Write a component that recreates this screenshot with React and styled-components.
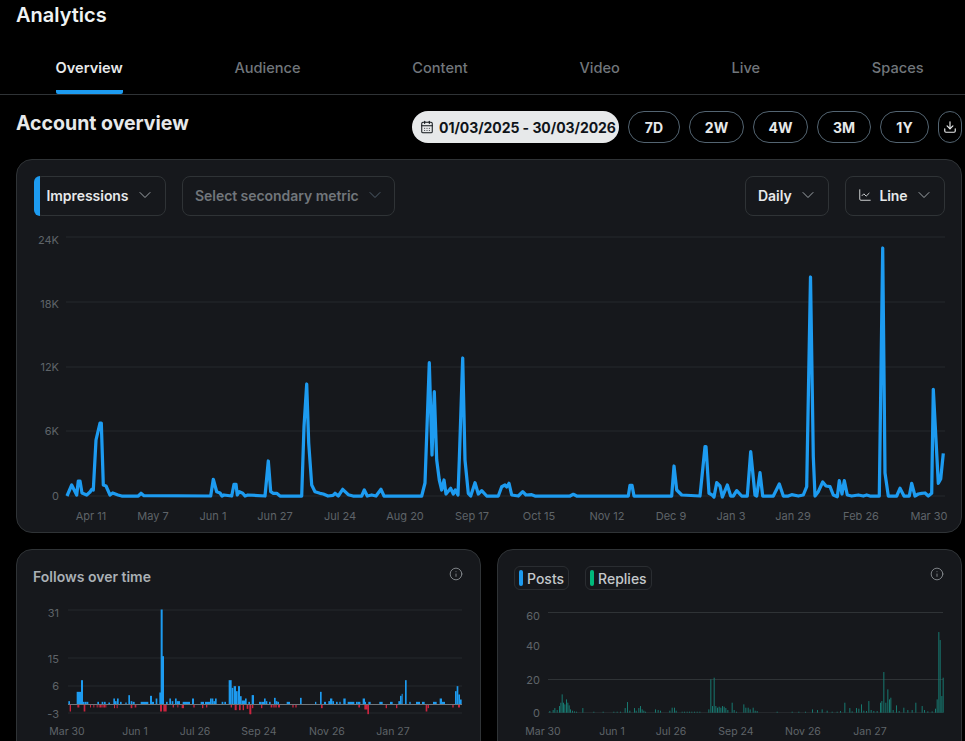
import React from 'react';
import styled, { createGlobalStyle } from 'styled-components';
import { CalendarDays, ChartLine, ChevronDown, Download, Info } from 'lucide-react';

const GlobalStyle = createGlobalStyle`
    html, body {
        margin: 0;
        padding: 0;
        background: #000;
        overflow: hidden;
    }
    * {
        box-sizing: border-box;
    }
`;

const TABS = ['Overview', 'Audience', 'Content', 'Video', 'Live', 'Spaces'];
const RANGES = [['7D', 52], ['2W', 55], ['4W', 55], ['3M', 54], ['1Y', 49]];

// main chart points, in page pixels
const IMPRESSIONS = [
    [67, 496], [71.7, 485], [76.7, 495], [78.3, 481], [80, 481], [82, 493], [86.7, 495], [90, 492], [91.7, 489.5], [93.3, 490],
    [96, 440], [100, 423], [101.3, 423], [103.3, 485], [106, 486], [110, 495], [112.7, 493], [118, 495], [121.7, 496],
    [138.3, 496], [141, 493.3], [144, 495.7], [210.7, 496], [213.3, 479.3], [216.7, 491.7], [220, 493], [222, 496], [224, 495],
    [231.7, 496], [234, 484.3], [236, 484.3], [237.3, 495], [239.3, 491.7], [242.7, 493.3], [245, 496], [248, 495], [265, 496],
    [268.3, 461], [270.7, 491.7], [273.3, 493.3], [276.7, 493.3], [280, 496], [301.7, 496], [304, 426.7], [306.7, 384], [308.7, 443],
    [311.7, 485], [315, 491.7], [320, 493.3], [323.3, 494], [328, 496], [333, 495.3], [335, 493.3], [338.3, 496], [342.7, 489.3],
    [348.3, 494.7], [353, 496], [361.7, 496], [364.3, 490], [367.3, 496], [371.7, 495], [376, 496], [381, 489.3], [384, 496],
    [421.7, 496], [425, 483], [429.3, 362.7], [432, 455], [434.3, 391.7], [436.7, 460], [439.3, 480], [441.7, 490], [444, 480],
    [446, 494], [450.7, 488.3], [453.3, 494], [455.3, 490], [458, 495], [459.3, 460], [462.7, 358], [465, 460], [468.3, 493.3],
    [470.7, 496], [475, 482.7], [478.3, 494], [481.7, 490.7], [486.7, 496], [498.3, 496], [501.7, 486.7], [505, 485], [506.7, 487],
    [509, 483.3], [511.7, 495], [518.3, 496], [522.7, 491.7], [526, 495], [531.7, 494.7], [535, 496], [570, 496], [573.3, 494.3],
    [576.7, 496], [628.3, 496], [630, 485.3], [632, 485.3], [634, 496], [671.7, 496], [674, 466], [676.7, 490], [681.7, 495],
    [700, 496], [705, 446.7], [706, 446.7], [709, 493.3], [711.7, 494.7], [714, 497], [716.7, 482.7], [720, 486], [722.3, 497],
    [727.3, 485], [730.7, 496], [733.3, 496], [736.7, 490.7], [741.7, 496], [747.3, 496], [750.7, 451.7], [755, 495], [756.7, 496],
    [760, 472.7], [762.7, 496], [773.3, 496], [779.3, 484], [783.3, 496], [788.3, 496], [791.7, 494.7], [798.3, 496], [803.3, 495],
    [806.7, 486.7], [810.5, 277], [813.3, 456.7], [815, 496], [818.3, 491.7], [822.7, 482], [826, 486], [830, 486.7], [833.3, 495],
    [837.3, 496.7], [839.3, 480.7], [842, 494], [844.3, 480.7], [847.3, 495], [851.7, 496], [858.3, 495], [863.3, 496], [866.7, 495],
    [870, 496], [879.3, 496], [882.7, 248], [885, 473], [888.3, 496], [896.7, 496], [900, 488.3], [904, 496], [909.3, 496],
    [911.7, 483.3], [915, 496], [918.3, 494], [921.7, 493.3], [925, 493], [928.3, 496], [931.7, 493.3], [933.3, 389.3],
    [938.3, 483.3], [940.7, 479], [943.3, 453.3],
];

const MAIN_Y = [['24K', 237, 244], ['18K', 302, 308], ['12K', 367, 371], ['6K', 431, 435], ['0', 496, 500]];
const MAIN_X = [
    ['Apr 11', 91], ['May 7', 153], ['Jun 1', 213], ['Jun 27', 275], ['Jul 24', 340], ['Aug 20', 405], ['Sep 17', 472],
    ['Oct 15', 539], ['Nov 12', 607], ['Dec 9', 671], ['Jan 3', 731], ['Jan 29', 793], ['Feb 26', 861], ['Mar 30', 929],
];

// follows bars: [from, to, height] measured on 3x crops, first half starts at x=40, second at x=250
const FOLLOWS_UP_A = [
    [85, 90, 10], [110, 123, 38], [123, 129, 73], [129, 134, 8], [135, 140, 8], [140, 145, 8], [172, 177, 8], [185, 190, 8],
    [192, 197, 8], [205, 210, 6], [220, 225, 18], [225, 230, 10], [231, 236, 18], [240, 245, 8], [256, 260, 6], [265, 270, 28],
    [272, 277, 10], [278, 284, 8], [302, 325, 8], [330, 336, 26], [336, 342, 8], [347, 352, 18], [358, 363, 36], [362, 368, 285],
    [364, 372, 145], [378, 383, 8], [388, 393, 18], [395, 400, 10], [405, 410, 18], [410, 420, 10], [428, 450, 8], [456, 462, 18],
    [482, 492, 8], [495, 510, 8], [510, 515, 18], [515, 520, 18], [520, 525, 10], [525, 530, 18], [545, 550, 8], [553, 558, 8],
    [566, 575, 73], [575, 580, 50], [581, 588, 55], [588, 593, 40], [594, 600, 55], [600, 605, 25], [605, 615, 12], [615, 620, 18],
    [625, 630, 8], [637, 642, 28], [657, 660, 6],
];
const FOLLOWS_UP_B = [
    [5, 10, 28], [27, 35, 8], [35, 42, 8], [42, 47, 18], [47, 52, 10], [57, 62, 8], [72, 77, 20], [77, 82, 10], [82, 87, 8],
    [110, 120, 8], [150, 155, 20], [195, 199, 8], [210, 215, 38], [222, 228, 8], [235, 240, 10], [240, 247, 18], [247, 252, 10],
    [258, 263, 8], [268, 272, 8], [280, 287, 18], [293, 313, 8], [318, 323, 8], [323, 331, 8], [338, 345, 18], [345, 348, 8],
    [355, 362, 8], [388, 398, 8], [420, 428, 8], [445, 450, 10], [450, 455, 26], [455, 458, 32], [465, 470, 73], [478, 482, 8],
    [498, 510, 8], [516, 524, 8], [549, 560, 8], [569, 576, 18], [576, 585, 8], [615, 620, 40], [620, 625, 55], [625, 630, 30],
    [630, 635, 15],
];
const FOLLOWS_DOWN_A = [
    [89, 93, 18], [112, 118, 6], [131, 136, 18], [150, 153, 6], [160, 163, 6], [170, 173, 6], [176, 179, 6], [180, 183, 6],
    [184, 187, 6], [188, 191, 6], [192, 195, 6], [196, 199, 6], [222, 225, 8], [230, 233, 8], [272, 277, 8], [284, 289, 6],
    [360, 366, 18], [370, 380, 18], [398, 402, 6], [412, 415, 6], [425, 432, 8], [460, 464, 6], [486, 490, 8], [498, 502, 6],
    [572, 576, 6], [584, 590, 14], [597, 602, 14], [608, 612, 14], [620, 625, 10], [628, 633, 26], [636, 640, 8],
];
const FOLLOWS_DOWN_B = [
    [0, 4, 26], [33, 37, 8], [62, 67, 6], [70, 74, 6], [76, 80, 6], [84, 90, 6], [127, 131, 6], [136, 140, 6], [213, 218, 8],
    [325, 330, 6], [343, 353, 12], [352, 357, 26], [407, 411, 8], [438, 442, 8], [527, 532, 18], [533, 537, 8], [607, 611, 6],
    [624, 630, 6],
];

const FOLLOWS_Y = [['31', 610, 617], ['15', 658, 663], ['6', 686, 690], ['-3', 713, 718]];
const FOLLOWS_X = [['Mar 30', 67], ['Jun 1', 135], ['Jul 26', 195], ['Sep 24', 259], ['Nov 26', 327], ['Jan 27', 393]];
const POSTS_Y = [['60', 620], ['40', 650], ['20', 684], ['0', 717]];
const POSTS_X = [['Mar 30', 543], ['Jun 1', 612], ['Jul 26', 671], ['Sep 24', 736], ['Nov 26', 803], ['Jan 27', 870]];

// posts bars: [x, height] on a 3x crop starting at x=490
const POSTS = [
    [178, 5], [188, 8], [193, 14], [200, 8], [207, 20], [211, 30], [215, 55], [219, 30], [223, 25], [228, 40], [232, 30], [236, 22],
    [240, 10], [246, 6], [252, 4], [258, 3], [277, 14], [310, 3], [338, 3], [370, 3], [380, 3], [390, 3], [404, 14], [411, 32],
    [418, 6], [432, 14], [437, 6], [445, 14], [450, 20], [455, 10], [460, 6], [465, 3], [495, 10], [503, 8], [510, 6], [538, 6],
    [545, 15], [552, 15], [557, 6], [575, 3], [582, 3], [590, 3], [597, 3], [604, 3], [612, 3], [620, 3], [628, 3], [655, 10],
    [661, 100], [666, 20], [671, 105], [676, 20], [681, 15], [686, 18], [691, 15], [696, 20], [701, 18], [706, 14], [712, 8],
    [725, 30], [731, 8], [738, 3], [760, 25], [766, 15], [773, 15], [779, 10], [788, 15], [794, 6], [800, 5], [860, 3], [905, 3],
    [925, 3], [945, 3], [966, 10], [981, 8], [995, 10], [1010, 6], [1025, 3], [1040, 3], [1050, 5], [1063, 30], [1078, 14],
    [1085, 4], [1098, 14], [1105, 12], [1113, 25], [1120, 6], [1128, 5], [1135, 35], [1142, 8], [1150, 5], [1160, 5], [1170, 30],
    [1174, 35], [1180, 122], [1186, 30], [1192, 70], [1197, 40], [1201, 45], [1208, 8], [1218, 22], [1226, 5], [1240, 15],
    [1252, 8], [1265, 8], [1276, 30], [1295, 20], [1302, 8], [1312, 4], [1325, 4], [1335, 12], [1340, 40], [1345, 242], [1349, 218],
    [1354, 50], [1358, 105],
];

const FollowBars = ({ list, origin, down }) =>
    list.map(([from, to, h]) => (
        <Bar
            key={`${origin}-${from}-${down}`}
            x={origin + from / 3}
            y={down ? 704.5 : 704.5 - h / 3}
            width={(to - from) / 3}
            height={down ? h / 3 + 1 : h / 3}
            $fill={down ? '#c9243f' : '#1d9bf0'}
        />
    ));

const App = () => {
    return (
        <Page>
            <GlobalStyle />
            <PageTitle>Analytics</PageTitle>

            <TabRow>
                {TABS.map((tab, i) => (
                    <Tab key={tab} $active={i === 0}>{tab}</Tab>
                ))}
            </TabRow>

            <OverviewRow>
                <Heading>Account overview</Heading>
                <Controls>
                    <DatePill>
                        <CalendarDays size={14} strokeWidth={1.75} />
                        01/03/2025 - 30/03/2026
                    </DatePill>
                    {RANGES.map(([label, width]) => (
                        <RangePill key={label} $width={width}>{label}</RangePill>
                    ))}
                    <RangePill $width={24} $round><Download size={14} strokeWidth={2} /></RangePill>
                </Controls>
            </OverviewRow>

            <Card>
                <Toolbar>
                    <SelectGroup>
                        <Select $width={132}>
                            <Accent />
                            Impressions
                            <ChevronDown size={20} strokeWidth={1.1} />
                        </Select>
                        <Select $width={213} $muted>
                            Select secondary metric
                            <ChevronDown size={20} strokeWidth={1.1} />
                        </Select>
                    </SelectGroup>
                    <SelectGroup>
                        <Select $width={84}>
                            Daily
                            <ChevronDown size={20} strokeWidth={1.1} />
                        </Select>
                        <Select $width={100}>
                            <ChartLine size={14} strokeWidth={1.5} color="#e7e9ea" />
                            <LineLabel>Line</LineLabel>
                            <ChevronDown size={20} strokeWidth={1.1} />
                        </Select>
                    </SelectGroup>
                </Toolbar>

                <MainChart viewBox="17 230 944 295">
                    {MAIN_Y.map(([label, y, textY]) => (
                        <g key={label}>
                            <GridLine x1="66" x2="945" y1={y} y2={y} />
                            <AxisText x="59" y={textY} $end>{label}</AxisText>
                        </g>
                    ))}
                    {MAIN_X.map(([label, x]) => (
                        <AxisText key={label} x={x} y="520">{label}</AxisText>
                    ))}
                    <TrendLine points={IMPRESSIONS.map((p) => p.join(',')).join(' ')} />
                </MainChart>
            </Card>

            <BottomGrid>
                <SmallCard>
                    <CardHead>
                        <CardTitle>Follows over time</CardTitle>
                        <InfoIcon><Info size={14} strokeWidth={1.5} /></InfoIcon>
                    </CardHead>
                    <SmallChart viewBox="17 596 463 150">
                        {FOLLOWS_Y.map(([label, y, textY]) => (
                            <g key={label}>
                                <GridLine x1="68" x2="462" y1={y} y2={y} />
                                <AxisText x="59" y={textY} $end>{label}</AxisText>
                            </g>
                        ))}
                        <FollowBars list={FOLLOWS_UP_A} origin={40} />
                        <FollowBars list={FOLLOWS_UP_B} origin={250} />
                        <FollowBars list={FOLLOWS_DOWN_A} origin={40} down />
                        <FollowBars list={FOLLOWS_DOWN_B} origin={250} down />
                        <ZeroLine x1="68" x2="462" y1="704.5" y2="704.5" />
                        {FOLLOWS_X.map(([label, x]) => (
                            <AxisText key={label} x={x} y="735" $size={10.5}>{label}</AxisText>
                        ))}
                    </SmallChart>
                </SmallCard>

                <SmallCard>
                    <CardHead>
                        <Legend>
                            <LegendChip><Swatch $color="#1d9bf0" />Posts</LegendChip>
                            <LegendChip><Swatch $color="#00ba7c" />Replies</LegendChip>
                        </Legend>
                        <InfoIcon><Info size={14} strokeWidth={1.5} /></InfoIcon>
                    </CardHead>
                    <SmallChart viewBox="498 596 463 150">
                        <PostsLine x1="548" x2="943" y1="612.5" y2="612.5" />
                        <PostsLine x1="548" x2="943" y1="679.5" y2="679.5" />
                        <GridLine x1="548" x2="943" y1="712.5" y2="712.5" />
                        {POSTS_Y.map(([label, y]) => (
                            <AxisText key={label} x="540" y={y} $end>{label}</AxisText>
                        ))}
                        {POSTS.map(([x, h]) => (
                            <Bar key={x} x={490 + x / 3} y={712.7 - h / 3} width={1} height={h / 3} $fill="#17786f" />
                        ))}
                        {POSTS_X.map(([label, x]) => (
                            <AxisText key={label} x={x} y="735" $size={10.5}>{label}</AxisText>
                        ))}
                    </SmallChart>
                </SmallCard>
            </BottomGrid>
        </Page>
    );
};

export default App;

const Page = styled.div`
    width: 965px;
    height: 741px;
    overflow: hidden;
    background: #000;
    color: #e7e9ea;
    font-family: Inter, "Liberation Sans", sans-serif;
`;

const PageTitle = styled.h1`
    height: 40px;
    margin: 0;
    padding: 3px 16px 0;
    font-size: 20px;
    line-height: 24px;
    font-weight: 600;
    color: #eff3f4;
`;

const TabRow = styled.div`
    display: flex;
    gap: 111.7px;
    height: 55px;
    padding-left: 55.5px;
    border-bottom: 1px solid #2f3336;
    overflow: hidden;
`;

const Tab = styled.div`
    display: flex;
    align-items: center;
    height: 54px;
    padding-top: 6px;
    font-size: 14.6px;
    font-weight: ${(p) => (p.$active ? 600 : 500)};
    color: ${(p) => (p.$active ? '#e7e9ea' : '#71767b')};
    border-bottom: 4px solid ${(p) => (p.$active ? '#1d9bf0' : 'transparent')};
    border-radius: 2px;
`;

const OverviewRow = styled.div`
    display: flex;
    justify-content: space-between;
    align-items: flex-start;
    padding: 16px 3px 0 16px;
`;

const Heading = styled.h2`
    margin: 0;
    font-size: 19.5px;
    line-height: 25px;
    font-weight: 700;
    color: #e7e9ea;
`;

const Controls = styled.div`
    display: flex;
    gap: 9px;
`;

const DatePill = styled.div`
    display: flex;
    align-items: center;
    gap: 5px;
    width: 207px;
    height: 32px;
    padding-left: 8px;
    border-radius: 16px;
    background: #e7e9ea;
    color: #0f1419;
    font-size: 14px;
    font-weight: 700;
    letter-spacing: -0.05px;
    white-space: nowrap;
`;

const RangePill = styled.div`
    display: flex;
    align-items: center;
    justify-content: center;
    width: ${(p) => p.$width}px;
    height: 32px;
    border: 1px solid #536471;
    border-radius: ${(p) => (p.$round ? 12 : 16)}px;
    font-size: 14px;
    font-weight: 700;
`;

const Card = styled.section`
    margin: 16px 3px 0 16px;
    padding-bottom: 7px;
    background: #16181c;
    border: 1px solid #2f3336;
    border-radius: 16px;
`;

const Toolbar = styled.div`
    display: flex;
    justify-content: space-between;
    padding: 16px 16px 14px 17px;
`;

const SelectGroup = styled.div`
    display: flex;
    gap: 16px;
`;

const Select = styled.div`
    position: relative;
    display: flex;
    align-items: center;
    justify-content: space-between;
    gap: 6px;
    width: ${(p) => p.$width}px;
    height: 40px;
    padding: 0 10px 2px 12px;
    border: 1px solid #2f3336;
    border-radius: 8px;
    font-size: 14px;
    font-weight: 600;
    letter-spacing: -0.05px;
    color: ${(p) => (p.$muted ? '#71767b' : '#e7e9ea')};
    white-space: nowrap;
    svg {
        flex: none;
        color: ${(p) => (p.$muted ? '#536471' : '#aab0b5')};
    }
`;

const LineLabel = styled.span`
    margin-left: 1px;
`;

const Accent = styled.span`
    flex: none;
    align-self: stretch;
    width: 6px;
    margin: -1px 0 -3px -13px;
    border-radius: 8px 0 0 8px;
    background: #1d9bf0;
`;

const MainChart = styled.svg`
    display: block;
    width: 944px;
    height: 295px;
`;

const GridLine = styled.line`
    stroke: #25282c;
    stroke-width: 1;
`;

const ZeroLine = styled.line`
    stroke: #71767b;
    stroke-width: 1;
`;

const PostsLine = styled.line`
    stroke: #2f3336;
    stroke-width: 1;
`;

const AxisText = styled.text`
    fill: #5f6469;
    font-size: ${(p) => p.$size || 11}px;
    text-anchor: ${(p) => (p.$end ? 'end' : 'middle')};
`;

const TrendLine = styled.polyline`
    fill: none;
    stroke: #1d9bf0;
    stroke-width: 3.25;
    stroke-linejoin: round;
`;

const Bar = styled.rect`
    fill: ${(p) => p.$fill};
`;

const BottomGrid = styled.div`
    display: grid;
    grid-template-columns: 465px 465px;
    gap: 16px;
    margin: 16px 0 0 16px;
`;

const SmallCard = styled.section`
    height: 220px;
    background: #16181c;
    border: 1px solid #2f3336;
    border-radius: 16px;
`;

const CardHead = styled.div`
    display: flex;
    justify-content: space-between;
    align-items: flex-start;
    height: 46px;
    padding: 17px 17px 0;
`;

const CardTitle = styled.h3`
    margin: 0 0 0 -1px;
    font-size: 14px;
    line-height: 20px;
    font-weight: 600;
    color: #aab0b5;
`;

const InfoIcon = styled.span`
    display: flex;
    color: #8b9095;
`;

const Legend = styled.div`
    display: flex;
    gap: 16px;
    margin: -1px 0 0 -1px;
`;

const LegendChip = styled.div`
    display: flex;
    align-items: center;
    gap: 4px;
    height: 24px;
    padding: 0 4px;
    border: 1px solid #2a2d31;
    border-radius: 6px;
    font-size: 14px;
    font-weight: 500;
    color: #c4c8cb;
`;

const Swatch = styled.span`
    width: 4px;
    height: 16px;
    border-radius: 2px;
    background: ${(p) => p.$color};
`;

const SmallChart = styled.svg`
    display: block;
    width: 463px;
    height: 150px;
`;
